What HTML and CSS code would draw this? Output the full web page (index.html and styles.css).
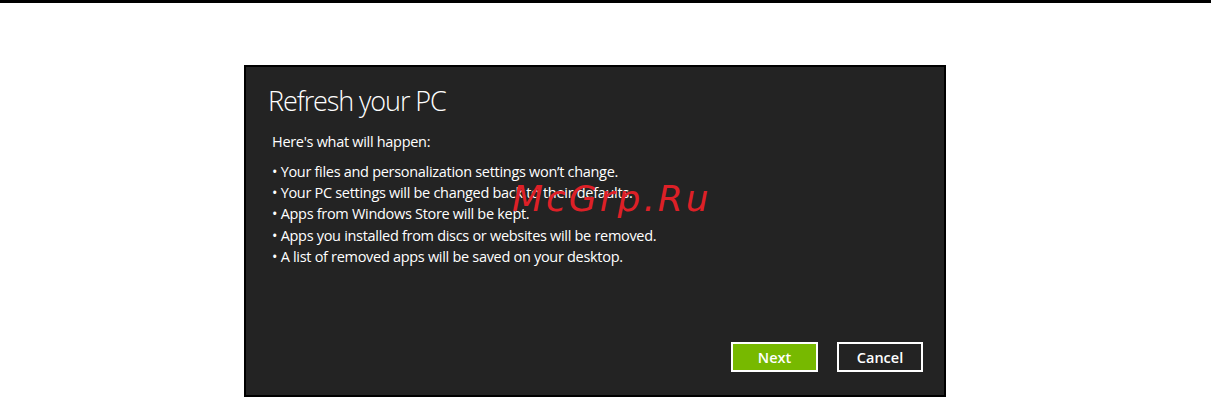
FILE: index.html
```html
<html>
  <head>
    <link rel="stylesheet" href="styles.css">
    <title>Refresh your PC</title>
  </head>
  <body>
    <div class="topline"></div>
    <div class="dialog">
      <h1>Refresh your PC</h1>
      <p class="lead">Here's what will happen:</p>
      <ul>
        <li>Your files and personalization settings won’t change.</li>
        <li>Your PC settings will be changed back to their defaults.</li>
        <li>Apps from Windows Store will be kept.</li>
        <li>Apps you installed from discs or websites will be removed.</li>
        <li>A list of removed apps will be saved on your desktop.</li>
      </ul>
      <div class="buttons">
        <button class="next">Next</button>
        <button class="cancel">Cancel</button>
      </div>
      <span class="mark">McGrp.Ru</span>
    </div>
  </body>
</html>
```

FILE: styles.css
```css
body {
  margin: 0;
  background: white;
  font-family: "Open Sans", sans-serif;
}

.topline {
  height: 3px;
  background: black;
}

.dialog {
  position: relative;
  box-sizing: border-box;
  width: 702px;
  height: 332px;
  margin: 62px 0 0 244px;
  border: 2px solid black;
  background: #232323;
  color: white;
  padding: 15px 21px 23px 22px;
  display: flex;
  flex-direction: column;
}

h1 {
  margin: 0;
  font-size: 27px;
  font-weight: 300;
  line-height: 38px;
  letter-spacing: -1.1px;
}

.lead {
  margin: 11px 0 0 4px;
  font-size: 14.5px;
  line-height: 21px;
  letter-spacing: -0.3px;
}

ul {
  margin: 9px 0 0 4px;
  padding: 0;
  list-style: none;
  font-size: 14.5px;
  line-height: 21.2px;
  letter-spacing: -0.3px;
}

li::before {
  content: "• ";
}

.buttons {
  margin-top: auto;
  display: flex;
  justify-content: flex-end;
  gap: 19px;
}

.buttons button {
  box-sizing: border-box;
  height: 30px;
  width: 87px;
  border: 2px solid white;
  color: white;
  font-family: "Open Sans", sans-serif;
  font-size: 14.5px;
  font-weight: 600;
  padding: 0;
}

.next {
  background: #77b900;
}

.cancel {
  background: #232323;
  width: 86px !important;
}

.mark {
  position: absolute;
  left: 266px;
  top: 111px;
  font-family: "DejaVu Sans", sans-serif;
  font-style: italic;
  font-size: 36px;
  letter-spacing: 3px;
  color: #dd2027;
}
```
